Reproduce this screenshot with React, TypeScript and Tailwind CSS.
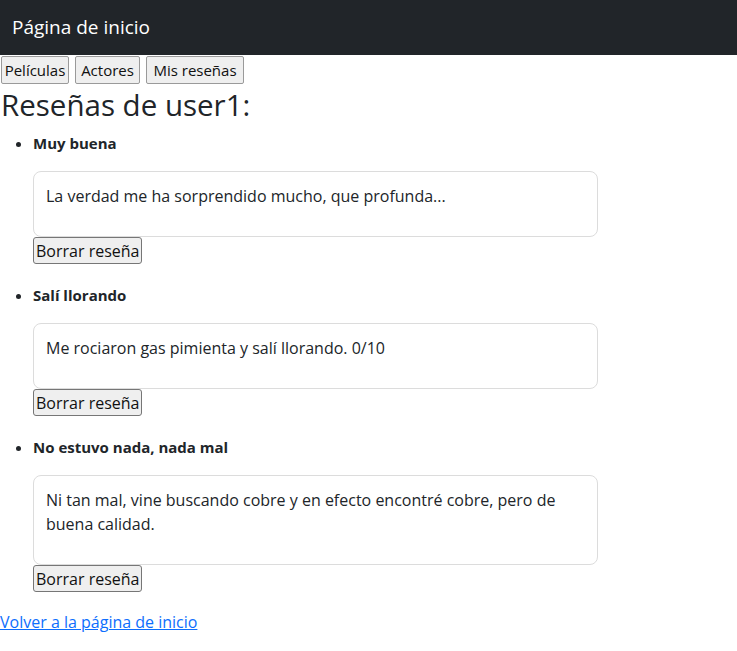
import React from "react";

const reviews = [
  { title: "Muy buena", body: "La verdad me ha sorprendido mucho, que profunda..." },
  { title: "Salí llorando", body: "Me rociaron gas pimienta y salí llorando. 0/10" },
  {
    title: "No estuvo nada, nada mal",
    body: "Ni tan mal, vine buscando cobre y en efecto encontré cobre, pero de buena calidad.",
  },
];

const navButton =
  "h-[28px] px-0 bg-[#efefef] border border-[#9a9a9a] text-[15px] leading-none text-[#111] rounded-[2px]";

export default function App() {
  return (
    <div className="min-h-[651px] bg-white text-[#212529] font-['Open_Sans',sans-serif]">
      <header className="h-[55px] bg-[#212529] flex items-center px-[12px]">
        <span className="text-white text-[19px]">Página de inicio</span>
      </header>

      <nav className="flex gap-[6px] mt-[1px] pl-[1px]">
        <button className={`${navButton} w-[68px]`}>Películas</button>
        <button className={`${navButton} w-[65px]`}>Actores</button>
        <button className={`${navButton} w-[98px]`}>Mis reseñas</button>
      </nav>

      <h2 className="text-[29.5px] leading-[34px] mt-[4px] mb-[9px] pl-[1px]">Reseñas de user1:</h2>

      <ul className="list-disc pl-[33px] m-0">
        {reviews.map((r) => (
          <li key={r.title} className="text-[15px] marker:text-[15px] pb-[19px]">
            <div className="font-bold leading-[24px]">{r.title}</div>
            <div className="mt-[16px] w-[565px] border border-[#dcdcdc] rounded-[8px] px-[12px] pt-[12px] pb-[12px]">
              <p className="text-[16px] leading-[24px] mb-[16px]">{r.body}</p>
            </div>
            <button className="h-[27px] px-[2px] bg-[#efefef] border border-[#767676] rounded-[3px] text-[16px] leading-none text-[#111]">
              Borrar reseña
            </button>
          </li>
        ))}
      </ul>

      <a href="#" className="block -mt-[1px] text-[16px] leading-[24px] text-[#0d6efd] underline">
        Volver a la página de inicio
      </a>
    </div>
  );
}
